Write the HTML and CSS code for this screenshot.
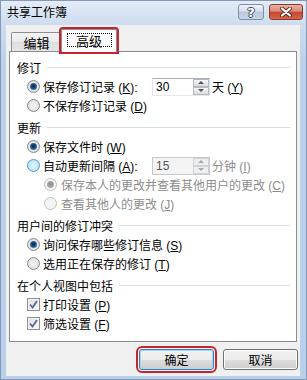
FILE: index.html
```html
<!DOCTYPE html>
<html lang="zh-CN">
<head>
<meta charset="utf-8">
<title>共享工作簿</title>
<link rel="stylesheet" href="styles.css">
</head>
<body>
<div class="window">
  <div class="titlebar">
    <span class="title">共享工作簿</span>
    <div class="caption-btns">
      <span class="cbtn help">?</span>
      <span class="cbtn close">
        <svg width="14" height="10" viewBox="0 0 14 10"><path d="M3 1.5 L11 8.5 M11 1.5 L3 8.5" stroke="#5a2a22" stroke-width="4" stroke-linecap="round"/><path d="M3 1.5 L11 8.5 M11 1.5 L3 8.5" stroke="#fff" stroke-width="2.2" stroke-linecap="round"/></svg>
      </span>
    </div>
  </div>
  <div class="client">
    <div class="tabs">
      <div class="tab">编辑</div>
      <div class="tab active"><span class="focus">高级</span></div>
    </div>
    <div class="panel">
      <div class="group-h"><span>修订</span></div>
      <div class="row">
        <span class="radio checked"></span>
        <span class="label">保存修订记录 (<u>K</u>):</span>
        <span class="spin"><span class="spin-val">30</span><span class="spin-btns"><span class="sb up"></span><span class="sb down"></span></span></span>
        <span class="after">天 (<u>Y</u>)</span>
      </div>
      <div class="row"><span class="radio"></span><span>不保存修订记录 (<u>D</u>)</span></div>

      <div class="group-h gap"><span>更新</span></div>
      <div class="row"><span class="radio checked"></span><span>保存文件时 (<u>W</u>)</span></div>
      <div class="row">
        <span class="radio hot"></span>
        <span class="label">自动更新间隔 (<u>A</u>):</span>
        <span class="spin disabled"><span class="spin-val">15</span><span class="spin-btns"><span class="sb up"></span><span class="sb down"></span></span></span>
        <span class="after gray">分钟 (<u>I</u>)</span>
      </div>
      <div class="row sub"><span class="radio disabled checked"></span><span class="gray">保存本人的更改并查看其他用户的更改 (<u>C</u>)</span></div>
      <div class="row sub"><span class="radio disabled"></span><span class="gray">查看其他人的更改 (<u>J</u>)</span></div>

      <div class="group-h gap"><span>用户间的修订冲突</span></div>
      <div class="row"><span class="radio checked"></span><span>询问保存哪些修订信息 (<u>S</u>)</span></div>
      <div class="row"><span class="radio"></span><span>选用正在保存的修订 (<u>T</u>)</span></div>

      <div class="group-h gap"><span>在个人视图中包括</span></div>
      <div class="row check-row"><span class="check"><svg width="11" height="11" viewBox="0 0 11 11"><path d="M2 5.5 L4.5 8.5 L9 2" fill="none" stroke="#55699a" stroke-width="1.8"/></svg></span><span>打印设置 (<u>P</u>)</span></div>
      <div class="row check-row"><span class="check"><svg width="11" height="11" viewBox="0 0 11 11"><path d="M2 5.5 L4.5 8.5 L9 2" fill="none" stroke="#55699a" stroke-width="1.8"/></svg></span><span>筛选设置 (<u>F</u>)</span></div>
    </div>
    <div class="buttons">
      <button class="btn default">确定</button>
      <button class="btn">取消</button>
    </div>
  </div>
</div>
</body>
</html>
```
FILE: styles.css
```css
* { box-sizing: border-box; }
html, body { margin: 0; padding: 0; }
body {
  width: 307px;
  height: 380px;
  overflow: hidden;
  font: 12px "Liberation Sans", "Noto Sans CJK SC", sans-serif;
  color: #000;
}
.window {
  width: 307px;
  height: 380px;
  display: flex;
  flex-direction: column;
  border: 1px solid #8399b5;
  background: linear-gradient(180deg, #e3ecf6 0, #cddcee 24px, #bcd2ea 60px, #b9d0ea 100%);
}
.titlebar {
  height: 24px;
  display: flex;
  align-items: center;
  flex: none;
}
.title {
  padding-left: 6px;
  line-height: 14px;
}
.caption-btns {
  margin-left: auto;
  margin-right: 3px;
  align-self: flex-start;
  margin-top: 3px;
  display: flex;
  gap: 5px;
}
.cbtn {
  height: 16px;
  border-radius: 3px;
  display: flex;
  align-items: center;
  justify-content: center;
}
.help {
  width: 26px;
  border: 1px solid #7d8ea8;
  background: linear-gradient(180deg, #eef2f8 0, #d5deea 45%, #b9c8dc 50%, #c8d6e8 100%);
  color: #fff;
  font: bold 13px "DejaVu Sans", sans-serif;
  text-shadow: 1px 0 #3d4a5e, -1px 0 #3d4a5e, 0 1px #3d4a5e, 0 -1px #3d4a5e;
}
.close {
  width: 34px;
  border: 1px solid #8d3b2f;
  background: linear-gradient(180deg, #e9b1a3 0, #d98a76 45%, #c6472e 50%, #d4664a 100%);
}
.client {
  flex: 1;
  margin: 0 6px 3px 5px;
  background: #f0f0f0;
  display: flex;
  flex-direction: column;
  padding: 4px 3px 0 3px;
}
.tabs {
  height: 22px;
  display: flex;
  align-items: flex-end;
  padding-left: 2px;
  flex: none;
}
.tab {
  width: 51px;
  height: 19px;
  border: 1px solid #898c95;
  border-bottom: none;
  border-radius: 2px 2px 0 0;
  background: linear-gradient(180deg, #f3f3f3 0, #ebebeb 50%, #dedede 50%, #e6e6e6 100%);
  display: flex;
  align-items: center;
  justify-content: center;
  font-size: 13px;
}
.tab.active {
  width: 56px;
  height: 23px;
  margin-left: -1px;
  margin-bottom: -1px;
  background: #fff;
  position: relative;
  z-index: 1;
  align-items: flex-start;
  padding-top: 3px;
  outline: 2px solid #c4262d;
}
.focus {
  width: 45px;
  height: 14px;
  border: 1px dotted #000;
  display: flex;
  align-items: center;
  justify-content: center;
}
.panel {
  height: 291px;
  flex: none;
  background: #fff;
  border: 1px solid #898c95;
  padding: 6px 6px 0 7px;
}
.group-h {
  height: 19px;
  display: flex;
  align-items: center;
}
.group-h::after {
  content: "";
  flex: 1;
  height: 1px;
  background: #d5dfe5;
  margin-left: 6px;
}
.group-h.gap { margin-top: 3px; }
.row {
  height: 19px;
  display: flex;
  align-items: center;
  padding-left: 10px;
  white-space: nowrap;
}
.row.sub { padding-left: 27px; }
.row.sub .radio { margin-right: 4px; }
.radio {
  width: 13px;
  height: 13px;
  flex: none;
  border-radius: 50%;
  border: 1px solid #8a8a8a;
  background: radial-gradient(circle at 50% 50%, #f7f7f7 0, #e6e6e6 55%, #c9c9c9 100%);
  margin-right: 3px;
  position: relative;
}
.radio.checked::after {
  content: "";
  position: absolute;
  left: 2px;
  top: 2px;
  width: 7px;
  height: 7px;
  border-radius: 50%;
  background: radial-gradient(circle at 50% 45%, #0c2440 0, #1f4f80 45%, #6fb3de 100%);
}
.radio.hot {
  border-color: #4e9ac8;
  background: radial-gradient(circle at 50% 50%, #e6f6fd 0, #c6e9fa 55%, #9fd4f0 100%);
}
.radio.disabled {
  border-color: #c0c0c0;
  background: #f4f4f4;
}
.radio.disabled.checked::after {
  background: radial-gradient(circle at 50% 45%, #8a8a8a 0, #a8a8a8 60%, #d0d0d0 100%);
}
.label { width: 109px; }
.after { margin-left: 2px; }
.gray { color: #8d8d8d; }
.spin {
  width: 58px;
  height: 18px;
  border: 1px solid;
  border-color: #abadb3 #dbdfe6 #e3e9ef #e2e3ea;
  background: #fff;
  display: flex;
}
.spin-val {
  flex: 1;
  padding-left: 3px;
  line-height: 16px;
}
.spin-btns {
  width: 16px;
  display: flex;
  flex-direction: column;
}
.sb {
  flex: 1;
  border: 1px solid #b4bac3;
  background: linear-gradient(180deg, #f6f6f6, #dcdcdc);
  display: flex;
  align-items: center;
  justify-content: center;
}
.sb::after {
  content: "";
  width: 0;
  height: 0;
  border-left: 3px solid transparent;
  border-right: 3px solid transparent;
}
.sb.up::after { border-bottom: 3px solid #4d5560; }
.sb.down::after { border-top: 3px solid #4d5560; }
.spin.disabled { background: #f4f4f4; border-color: #c8c9cc; }
.spin.disabled .spin-val { color: #555; }
.spin.disabled .sb { border-color: #cfd2d6; background: #efefef; }
.spin.disabled .sb.up::after { border-bottom-color: #a8a8a8; }
.spin.disabled .sb.down::after { border-top-color: #a8a8a8; }
.check {
  width: 13px;
  height: 13px;
  flex: none;
  border: 1px solid #8e8f8f;
  background: linear-gradient(135deg, #dedede, #fbfbfb);
  box-shadow: inset 0 0 0 1px #f4f4f4;
  margin-right: 3px;
  display: flex;
  align-items: center;
  justify-content: center;
}
.buttons {
  margin-top: 7px;
  margin-right: -1px;
  display: flex;
  justify-content: flex-end;
  gap: 9px;
}
.btn {
  width: 75px;
  height: 21px;
  border: 1px solid #707070;
  border-radius: 3px;
  background: linear-gradient(180deg, #f2f2f2 0, #ebebeb 50%, #dddddd 50%, #cfcfcf 100%);
  box-shadow: inset 0 0 0 1px #fbfbfb;
  font: 12px "Liberation Sans", "Noto Sans CJK SC", sans-serif;
  color: #000;
  padding: 0;
}
.btn.default {
  border-color: #3c7fb1;
  box-shadow: inset 0 0 0 1px #9fdbf7;
  outline: 2px solid #c4262d;
  outline-offset: 1px;
}
```
